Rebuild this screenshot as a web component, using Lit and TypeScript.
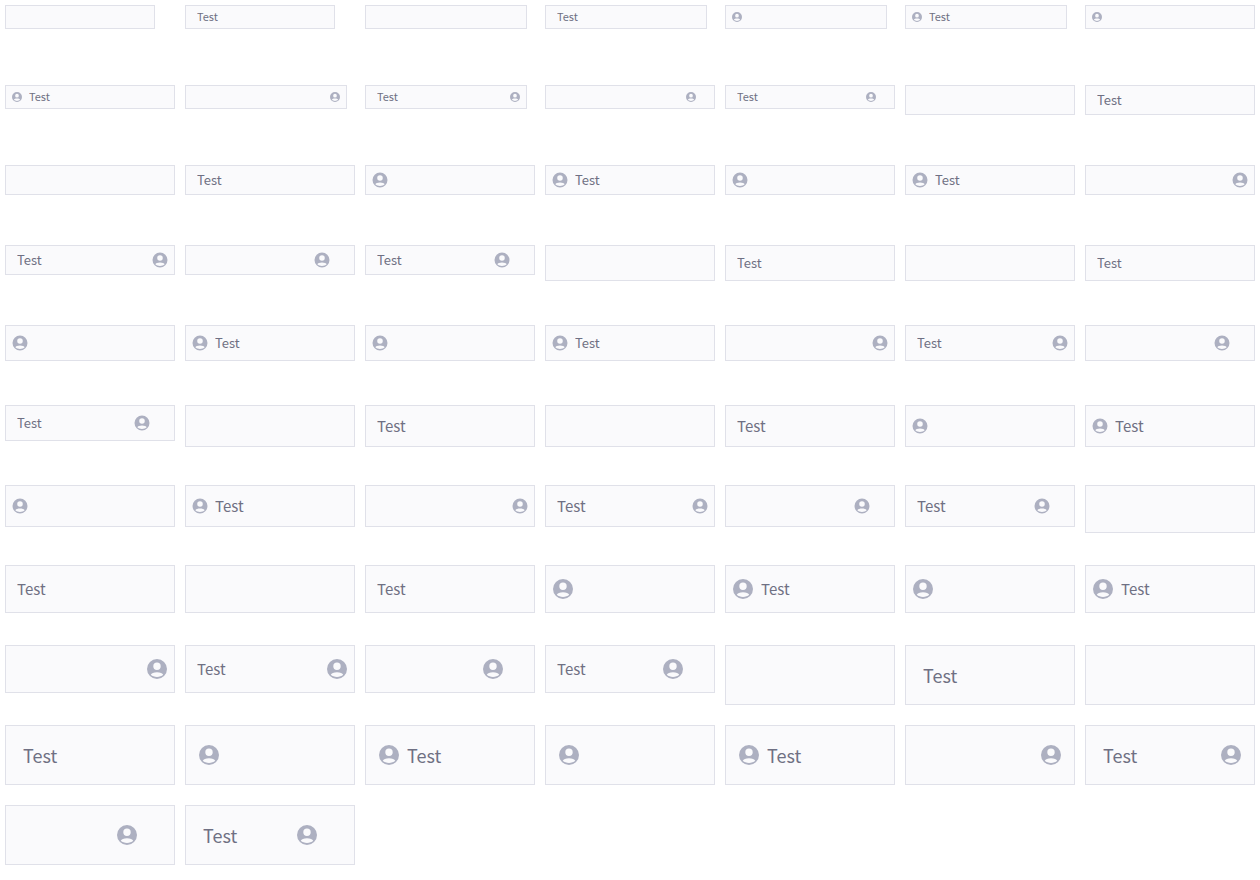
import { LitElement, html, css, nothing } from "lit";
import { customElement, property } from "lit/decorators.js";

type Slot = "none" | "left" | "right" | "action";

@customElement("text-field")
class TextField extends LitElement {
  @property() size = "s";
  @property() icon: Slot = "none";
  @property() value = "";
  @property() width = "full";
  @property() label = "";

  static styles = css`
    :host {
      display: block;
    }
    .field {
      box-sizing: border-box;
      display: flex;
      align-items: center;
      gap: 6px;
      max-width: 100%;
      padding: 0 5px;
      border: 1px solid #e0e1e9;
      background: #fafafc;
      color: #adb0c1;
      --icon: 18px;
      --font: 13px;
      --lift: 2px;
    }
    .w-short { width: 150px; }
    .w-medium { width: 162px; }
    .xs { height: 24px; --icon: 12px; --font: 11px; }
    .s { height: 30px; }
    .m { height: 36px; }
    .l { height: 42px; --font: 15px; }
    .xl { height: 48px; --font: 15px; --icon: 24px; }
    .xxl { height: 60px; --font: 18px; --icon: 24px; --lift: 0px; padding: 0 11px; }
    .none, .right, .action { padding-left: 11px; }
    .xxl.none, .xxl.right, .xxl.action { padding-left: 17px; }
    .action::after {
      content: "";
      flex: none;
      width: var(--icon);
      margin-left: -6px;
    }
    svg {
      flex: none;
      display: block;
      width: var(--icon);
      height: var(--icon);
      fill: currentColor;
    }
    input {
      flex: 1;
      align-self: stretch;
      min-width: 0;
      margin: 0;
      padding: 0 0 var(--lift);
      border: 0;
      outline: 0;
      background: none;
      color: #6f7083;
      font-family: "Noto Sans CJK SC", "Noto Sans", sans-serif;
      font-size: var(--font);
    }
  `;

  private renderIcon() {
    return html`<svg viewBox="0 0 24 24" aria-hidden="true">
      <path
        fill-rule="evenodd"
        d="M12 2a10 10 0 1 0 0 20a10 10 0 1 0 0-20zM12 5.600a3.700 3.700 0 1 1 0 7.400a3.700 3.700 0 1 1 0-7.400zM12 19.900c-2.500 0-4.700-.8-6.200-2.200c.6-1.500 3-2.500 6.200-2.500s5.600 1 6.200 2.500c-1.500 1.400-3.700 2.200-6.200 2.200z"
      />
    </svg>`;
  }

  render() {
    const trailing = this.icon === "right" || this.icon === "action";
    return html`<div class="field ${this.size} ${this.icon} w-${this.width}">
      ${this.icon === "left" ? this.renderIcon() : nothing}
      <input type="text" aria-label=${this.label} .value=${this.value} />
      ${trailing ? this.renderIcon() : nothing}
    </div>`;
  }
}

const sizes = ["xs", "s", "m", "l", "xl", "xxl"];

const variants: { icon: Slot; compact: string }[] = [
  { icon: "none", compact: "short" },
  { icon: "none", compact: "medium" },
  { icon: "left", compact: "medium" },
  { icon: "left", compact: "full" },
  { icon: "right", compact: "medium" },
  { icon: "action", compact: "full" },
];

@customElement("app-root")
class AppRoot extends LitElement {
  static styles = css`
    :host {
      display: block;
      background: #fff;
    }
    .grid {
      display: grid;
      grid-template-columns: repeat(auto-fill, minmax(170px, 1fr));
      grid-auto-rows: 70px;
      gap: 10px;
      padding: 5px;
    }
  `;

  render() {
    return html`<main class="grid">
      ${sizes.map((size) =>
        variants.map((v) =>
          ["", "Test"].map(
            (value) => html`<text-field
              size=${size}
              icon=${v.icon}
              width=${size === "xs" ? v.compact : "full"}
              value=${value}
              label="Text, size ${size}"
            ></text-field>`
          )
        )
      )}
    </main>`;
  }
}
